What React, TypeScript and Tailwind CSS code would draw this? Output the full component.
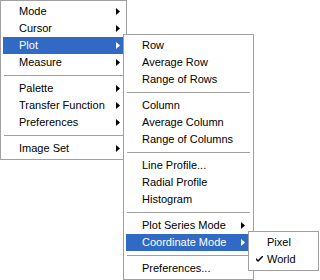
import React from "react";

type Item =
  | { sep: true }
  | { label: string; sub?: boolean; active?: boolean; check?: boolean };

const Arrow = ({ white }: { white?: boolean }) => (
  <svg width="4" height="7" viewBox="0 0 4 7" className="shrink-0">
    <path d="M0 0 L4 3.5 L0 7 Z" fill={white ? "#ffffff" : "#000000"} />
  </svg>
);

const Check = () => (
  <svg width="7" height="7" viewBox="0 0 7 7" className="absolute left-[5px] top-[5px]">
    <path d="M0 2 L0 4 L2 6 L7 1 L7 -1 L2 4 Z" fill="#000" />
  </svg>
);

function Menu({
  items,
  className,
  arrowPad,
}: {
  items: Item[];
  className: string;
  arrowPad: string;
}) {
  return (
    <div
      className={`absolute bg-white border border-[#a0a0a0] p-[2px] flex flex-col ${className}`}
    >
      {items.map((it, i) =>
        "sep" in it ? (
          <div key={i} className="h-[9px] flex items-center px-[1px]">
            <div className="h-px w-full bg-[#a0a0a0]" />
          </div>
        ) : (
          <div
            key={i}
            className={`relative h-[17px] flex items-center pl-[16px] ${arrowPad} ${
              it.active ? "bg-[#316ac5] text-white" : "text-black"
            }`}
          >
            {it.check && <Check />}
            <span className="flex-1 whitespace-nowrap leading-none">{it.label}</span>
            {it.sub && <Arrow white={it.active} />}
          </div>
        )
      )}
    </div>
  );
}

export default function App() {
  const main: Item[] = [
    { label: "Mode", sub: true },
    { label: "Cursor", sub: true },
    { label: "Plot", sub: true, active: true },
    { label: "Measure", sub: true },
    { sep: true },
    { label: "Palette", sub: true },
    { label: "Transfer Function", sub: true },
    { label: "Preferences", sub: true },
    { sep: true },
    { label: "Image Set", sub: true },
  ];
  const plot: Item[] = [
    { label: "Row" },
    { label: "Average Row" },
    { label: "Range of Rows" },
    { sep: true },
    { label: "Column" },
    { label: "Average Column" },
    { label: "Range of Columns" },
    { sep: true },
    { label: "Line Profile..." },
    { label: "Radial Profile" },
    { label: "Histogram" },
    { sep: true },
    { label: "Plot Series Mode", sub: true },
    { label: "Coordinate Mode", sub: true, active: true },
    { sep: true },
    { label: "Preferences..." },
  ];
  const coord: Item[] = [{ label: "Pixel" }, { label: "World", check: true }];
  return (
    <div
      className="relative w-[320px] h-[280px] bg-white overflow-hidden text-[11px]"
      style={{ fontFamily: '"Liberation Sans", Arial, sans-serif' }}
    >
      <Menu items={main} className="left-0 top-0 w-[127px]" arrowPad="pr-[4px]" />
      <Menu items={plot} className="left-[123px] top-[34px] w-[131px]" arrowPad="pr-[6px]" />
      <Menu items={coord} className="left-[248px] top-[231px] w-[71px]" arrowPad="pr-[4px]" />
    </div>
  );
}
